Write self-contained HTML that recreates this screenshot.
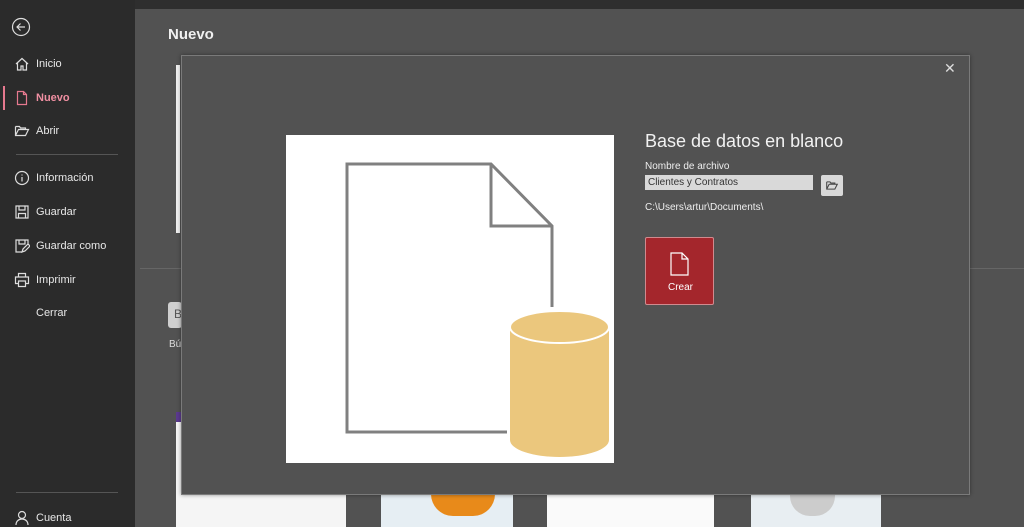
<!DOCTYPE html>
<html><head><meta charset="utf-8"><style>
*{margin:0;padding:0;box-sizing:border-box}
body{width:1024px;height:527px;overflow:hidden;background:#525252;font-family:"Segoe UI","Liberation Sans",sans-serif;position:relative;color:#fff}
.a{position:absolute}
.side{left:0;top:0;width:135px;height:527px;background:#2b2b2b}
.nav{position:absolute;left:36px;font-size:11px;color:#e8e8e8}
.ic{position:absolute;left:14px;width:16px;height:16px}
</style></head><body>
<div class="a" style="left:135px;top:0;width:889px;height:9px;background:#2e2e2e"></div>
<div class="a side"></div>
<svg class="a" style="left:11px;top:17px" width="20" height="20" viewBox="0 0 20 20" fill="none" stroke="#ddd" stroke-width="1.2"><circle cx="10" cy="10" r="8.5"/><path d="M14 10H6M9.5 6.5L6 10l3.5 3.5"/></svg>
<svg class="ic" style="top:56px" viewBox="0 0 16 16" fill="none" stroke="#ddd" stroke-width="1.2"><path d="M2 8L8 2.5 14 8M3.5 7v7h3.5v-4h2v4h3.5V7"/></svg>
<div class="nav" style="top:58px">Inicio</div>
<div class="a" style="left:3px;top:86px;width:2px;height:24px;background:#e6798f"></div>
<svg class="ic" style="top:90px" viewBox="0 0 16 16" fill="none" stroke="#e6798f" stroke-width="1.2"><path d="M3.5 1.5h6l3 3v10h-9z M9.5 1.5v3h3"/></svg>
<div class="nav" style="top:92px;color:#f08fa2;font-weight:bold">Nuevo</div>
<svg class="ic" style="top:123px" viewBox="0 0 16 16" fill="none" stroke="#ddd" stroke-width="1.2"><path d="M1.5 3.5h4l1 1.5h5v2M1.5 3.5v9h10l3-6h-10l-3 6"/></svg>
<div class="nav" style="top:125px">Abrir</div>
<div class="a" style="left:16px;top:154px;width:102px;height:1px;background:#555"></div>
<svg class="ic" style="top:170px" viewBox="0 0 16 16" fill="none" stroke="#ddd" stroke-width="1.2"><circle cx="8" cy="8" r="6.5"/><path d="M8 7v4.5M8 4.5v1"/></svg>
<div class="nav" style="top:172px">Información</div>
<svg class="ic" style="top:204px" viewBox="0 0 16 16" fill="none" stroke="#ddd" stroke-width="1.2"><path d="M2 2h12v12H2z M5 2v4h6V2 M4.5 14V9.5h7V14"/></svg>
<div class="nav" style="top:206px">Guardar</div>
<svg class="ic" style="top:238px" viewBox="0 0 16 16" fill="none" stroke="#ddd" stroke-width="1.2"><path d="M8 14H2V2h12v5 M5 2v4h6V2 M8 14l1-3 5-5 2 2-5 5z"/></svg>
<div class="nav" style="top:240px">Guardar como</div>
<svg class="ic" style="top:272px" viewBox="0 0 16 16" fill="none" stroke="#ddd" stroke-width="1.2"><path d="M4.5 5V1.5h7V5 M4.5 11.5H1.5V5h13v6.5h-3 M4.5 9h7v5.5h-7z"/></svg>
<div class="nav" style="top:274px">Imprimir</div>
<div class="nav" style="top:307px">Cerrar</div>
<div class="a" style="left:16px;top:492px;width:102px;height:1px;background:#555"></div>
<svg class="ic" style="top:510px" viewBox="0 0 16 16" fill="none" stroke="#ddd" stroke-width="1.2"><circle cx="8" cy="5" r="3.5"/><path d="M2 15c0-4 3-6 6-6s6 2 6 6"/></svg>
<div class="nav" style="top:512px">Cuenta</div>

<div class="a" style="left:168px;top:26px;font-size:15px;font-weight:bold;color:#f0f0f0">Nuevo</div>
<div class="a" style="left:176px;top:65px;width:4px;height:168px;background:#eee"></div>
<div class="a" style="left:140px;top:268px;width:884px;height:1px;background:#666"></div>
<div class="a" style="left:168px;top:302px;width:14px;height:26px;background:#cfcfcf;border-radius:3px;color:#555;font-size:12px;padding:5px 0 0 6px">B</div>
<div class="a" style="left:169px;top:339px;font-size:10px;color:#ddd">Bú</div>
<div class="a" style="left:176px;top:412px;width:6px;height:10px;background:#5b3a8e"></div>
<div class="a" style="left:176px;top:422px;width:170px;height:105px;background:#f5f5f5"></div>
<div class="a" style="left:381px;top:494px;width:132px;height:33px;background:#e6eef3"></div>
<div class="a" style="left:431px;top:494px;width:64px;height:22px;background:#e88a1a;border-radius:0 0 30px 30px"></div>
<div class="a" style="left:547px;top:494px;width:167px;height:33px;background:#fafafa"></div>
<div class="a" style="left:751px;top:494px;width:130px;height:33px;background:#e8eef2"></div>
<div class="a" style="left:790px;top:494px;width:45px;height:22px;background:#ccc;border-radius:0 0 20px 20px"></div>

<div class="a" style="left:181px;top:55px;width:789px;height:440px;background:#525252;border:1px solid #7a7a7a;box-shadow:0 0 4px rgba(0,0,0,.4)"></div>
<div class="a" style="left:944px;top:60px;font-size:14px;color:#ddd">✕</div>
<svg class="a" style="left:286px;top:135px" width="328" height="328" viewBox="286 135 328 328">
<rect x="286" y="135" width="328" height="328" fill="#fff"/>
<path d="M507 432H347V164H491l61 62v81 M491 164v62h61" fill="none" stroke="#808080" stroke-width="3"/>
<path d="M510 327v113a49.5 17 0 0 0 99 0V327z" fill="#ebc77d"/>
<ellipse cx="559.5" cy="327" rx="49.5" ry="16" fill="#ebc77d" stroke="#fff" stroke-width="2"/>
</svg>
<div class="a" style="left:645px;top:131px;font-size:18px;color:#f2f2f2">Base de datos en blanco</div>
<div class="a" style="left:645px;top:161px;font-size:10px;color:#eee">Nombre de archivo</div>
<div class="a" style="left:645px;top:175px;width:168px;height:15px;background:#d9d9d9;color:#333;font-size:10px;padding:2px 3px">Clientes y Contratos</div>
<div class="a" style="left:821px;top:175px;width:22px;height:21px;background:#d9d9d9;border-radius:2px"></div>
<svg class="a" style="left:825px;top:179px" width="14" height="13" viewBox="0 0 16 16" fill="none" stroke="#444" stroke-width="1.3"><path d="M1.5 3.5h4l1 1.5h5v2M1.5 3.5v9h10l3-6h-10l-3 6"/></svg>
<div class="a" style="left:645px;top:202px;font-size:10px;color:#eee">C:\Users\artur\Documents\</div>
<div class="a" style="left:645px;top:237px;width:69px;height:68px;background:#a4262c;border:1px solid #d08a8e;border-radius:2px"></div>
<svg class="a" style="left:670px;top:252px" width="19" height="24" viewBox="0 0 19 24" fill="none" stroke="#fff" stroke-width="1.2"><path d="M1 1h11l6 6v16H1z M12 1v6h6"/></svg>
<div class="a" style="left:668px;top:282px;font-size:10px;color:#fff">Crear</div>
</body></html>
